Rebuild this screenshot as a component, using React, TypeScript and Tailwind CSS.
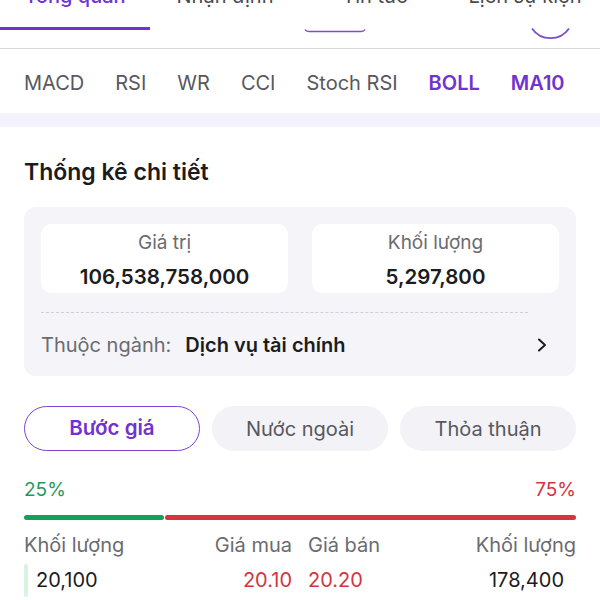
import React from "react";

export default function App() {
  const tabs = ["Tổng quan", "Nhận định", "Tin tức", "Lịch sự kiện"];
  const indicators = ["MACD", "RSI", "WR", "CCI", "Stoch RSI", "BOLL", "MA10"];
  return (
    <div className="relative w-[600px] h-[600px] overflow-hidden bg-white font-[Inter,'Noto_Sans',sans-serif] text-[#1c1c1e]">
      {/* top tabs */}
      <div className="relative flex h-[49px] flex-col border-b border-[#d6d6db]">
        <div className="-mt-[16px] grid grid-cols-4">
          {tabs.map((t, i) => (
            <div key={t} className="flex h-[46px] flex-col items-center justify-between">
              <span
                className={
                  "text-[20px] leading-6 " +
                  (i === 0 ? "font-medium text-[#6f33d2]" : "text-[#4a4a4f]")
                }
              >
                {t}
              </span>
              <div className={"h-[3px] w-full " + (i === 0 ? "bg-[#6f33d2]" : "bg-transparent")} />
            </div>
          ))}
        </div>
        <svg className="pointer-events-none absolute left-0 top-0" width="600" height="48">
          <path d="M305 29.5 Q306 31.5 309 31.5 L361 31.5 Q364 31.5 365 29.5" stroke="#7b4fcb" strokeWidth="1.6" fill="none" />
          <path d="M532 28.5 A22.5 22.5 0 0 0 569 28.5" stroke="#7b4fcb" strokeWidth="1.8" fill="none" />
        </svg>
      </div>

      {/* indicators */}
      <div className="flex h-[64px] items-center gap-[31px] px-6 pt-[4px] text-[20px]">
        {indicators.map((t) => (
          <span
            key={t}
            className={
              t === "BOLL" || t === "MA10" ? "font-semibold text-[#6f33d2]" : "text-[#58585d]"
            }
          >
            {t}
          </span>
        ))}
      </div>
      <div className="h-[14px] bg-[#f4f3fb]" />

      <div className="px-6">
        <h2 className="mt-[31px] text-[23px] font-semibold leading-7 text-[#1c1c1e]">Thống kê chi tiết</h2>

        {/* stats card */}
        <div className="mt-[21px] rounded-[12px] bg-[#f4f4f9] px-[17px] pt-[17px] pb-[19px]">
          <div className="grid grid-cols-2 gap-6">
            {[
              ["Giá trị", "106,538,758,000"],
              ["Khối lượng", "5,297,800"],
            ].map(([l, v]) => (
              <div key={l} className="flex h-[69px] flex-col items-center rounded-[10px] bg-white pt-[7px]">
                <span className="text-[19px] leading-6 text-[#6b6b70]">{l}</span>
                <span className="mt-[10px] text-[20.5px] font-semibold leading-6 text-[#1c1c1e]">{v}</span>
              </div>
            ))}
          </div>
          <div className="mt-[19px] mr-[31px] border-t border-dashed border-[#cfcfd8]" />
          <div className="mt-[20px] flex h-6 items-center">
            <span className="text-[20px] text-[#6b6b70]">Thuộc ngành:</span>
            <span className="ml-[14px] text-[20px] font-semibold text-[#1c1c1e]">Dịch vụ tài chính</span>
            <svg className="ml-auto mr-[11px]" width="12" height="16" viewBox="0 0 12 16">
              <path d="M3 2.5 L9 8 L3 13.5" stroke="#1c1c1e" strokeWidth="2" fill="none" strokeLinecap="round" strokeLinejoin="round" />
            </svg>
          </div>
        </div>

        {/* pills */}
        <div className="mt-[30px] grid grid-cols-3 gap-3">
          <div className="flex h-[45px] items-center justify-center rounded-full border-[1.5px] border-[#7a45d4] text-[20.5px] font-semibold text-[#6f33d2]">
            Bước giá
          </div>
          <div className="flex h-[45px] items-center justify-center rounded-full bg-[#f2f2f7] text-[20px] text-[#58585d]">
            Nước ngoài
          </div>
          <div className="flex h-[45px] items-center justify-center rounded-full bg-[#f2f2f7] text-[20px] text-[#58585d]">
            Thỏa thuận
          </div>
        </div>

        {/* ratio */}
        <div className="mt-[27px] flex h-6 items-center justify-between text-[19px]">
          <span className="text-[#1f9a5b]">25%</span>
          <span className="text-[#d3343f]">75%</span>
        </div>
        <div className="mt-[13px] flex h-[5px] gap-[1px]">
          <div className="w-[140px] rounded-full bg-[#17a05a]" />
          <div className="flex-1 rounded-full bg-[#d7343f]" />
        </div>

        {/* order book */}
        <div className="mt-[13px] grid grid-cols-2 gap-4 text-[20px]">
          <div className="flex h-6 items-center justify-between text-[#6b6b70]">
            <span>Khối lượng</span>
            <span>Giá mua</span>
          </div>
          <div className="flex h-6 items-center justify-between text-[#6b6b70]">
            <span>Giá bán</span>
            <span>Khối lượng</span>
          </div>
        </div>
        <div className="mt-[11px] grid grid-cols-2 gap-4 text-[20px]">
          <div className="flex h-6 items-center">
            <div className="h-[33px] w-[4px] rounded-full bg-[#d9f3e2]" />
            <span className="ml-[8px] text-[#1c1c1e]">20,100</span>
            <span className="ml-auto text-[#d3343f]">20.10</span>
          </div>
          <div className="flex h-6 items-center justify-between pr-[12px]">
            <span className="text-[#d3343f]">20.20</span>
            <span className="text-[#1c1c1e]">178,400</span>
          </div>
        </div>
      </div>
    </div>
  );
}
